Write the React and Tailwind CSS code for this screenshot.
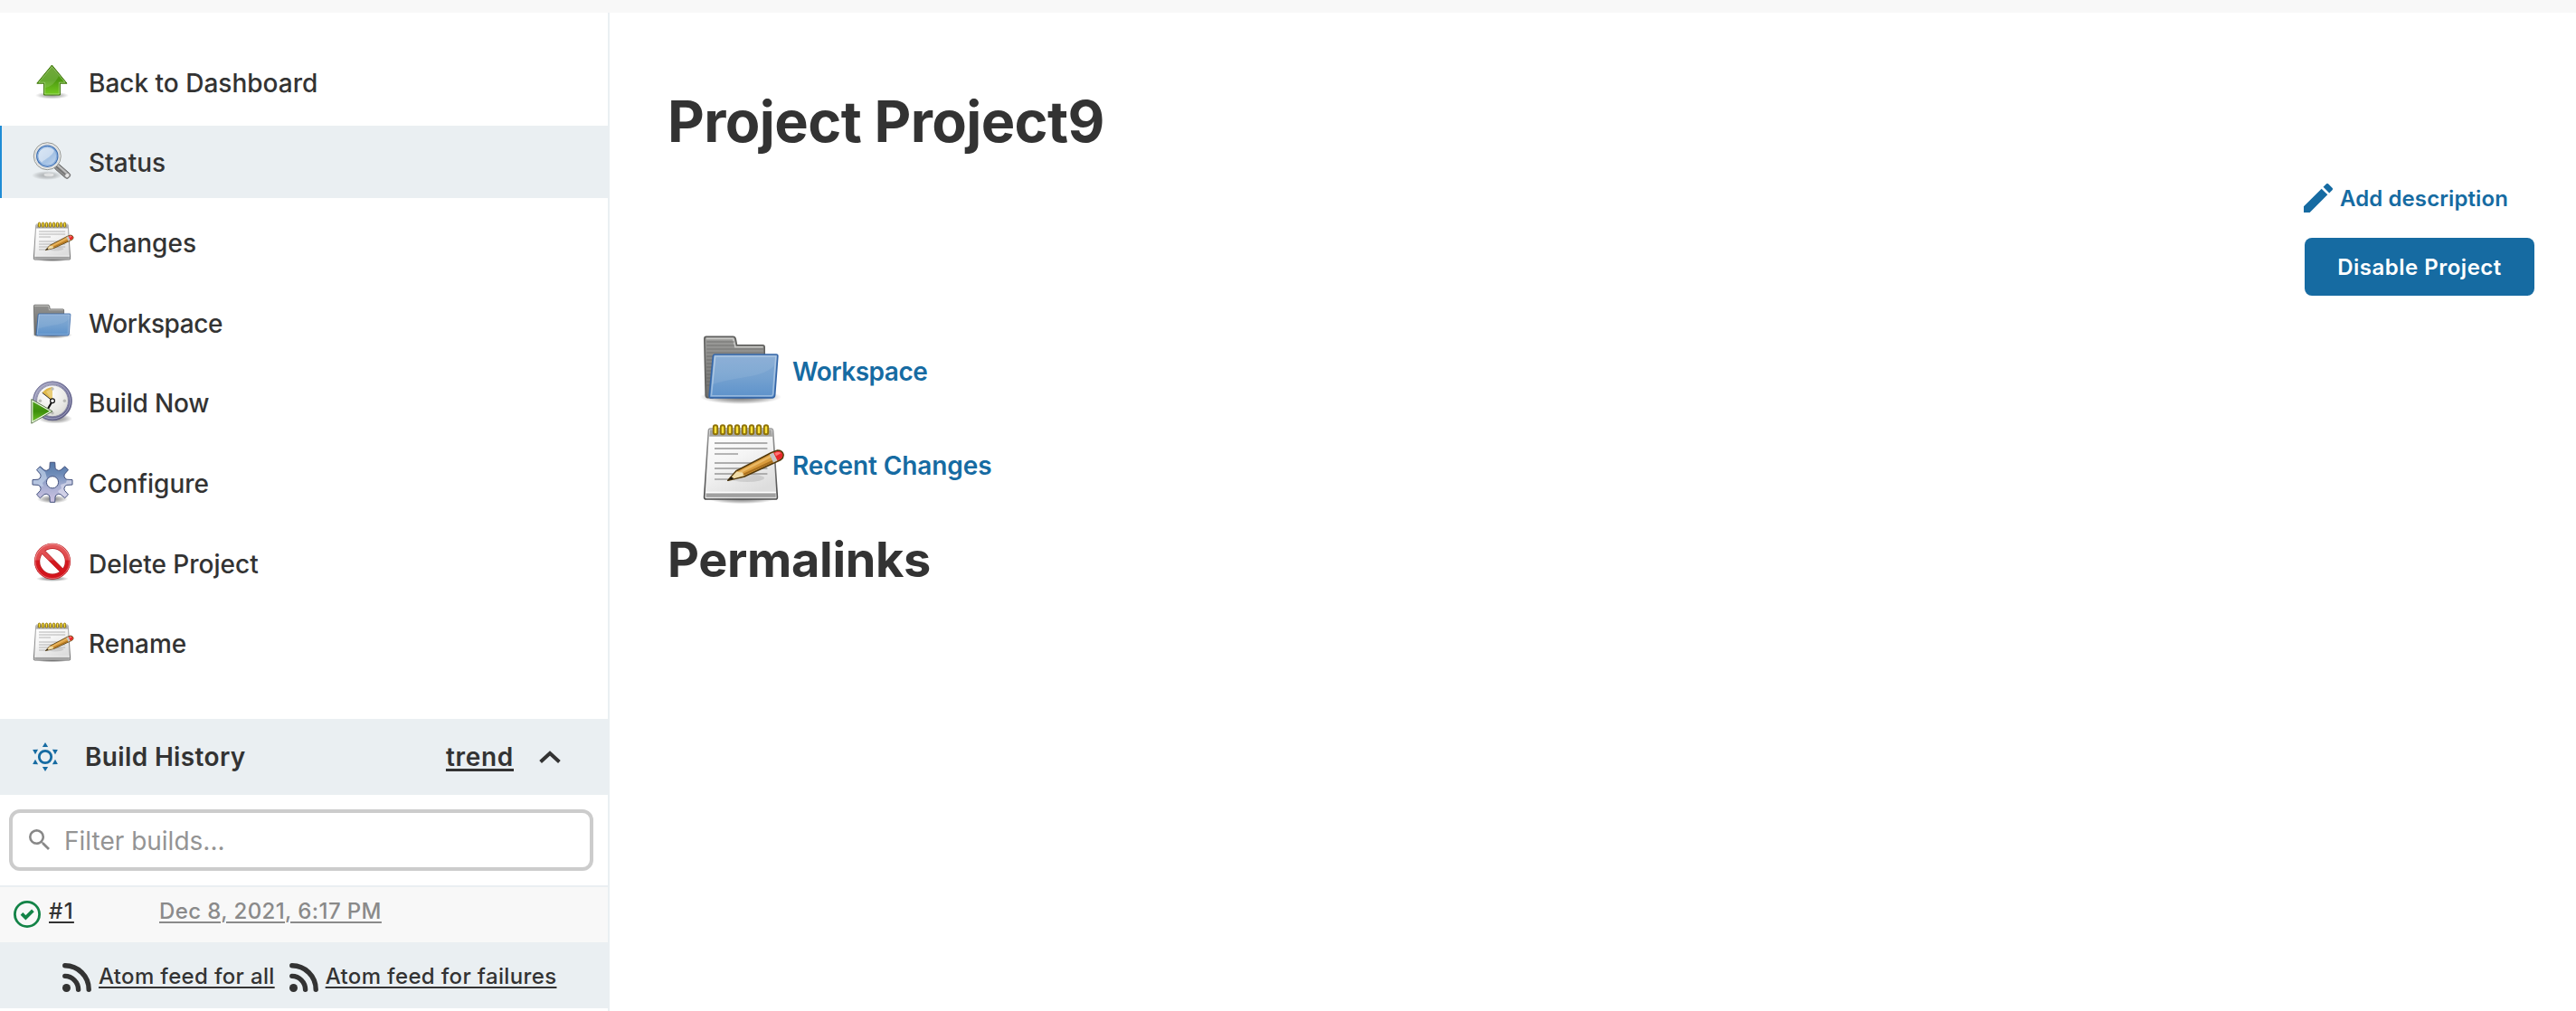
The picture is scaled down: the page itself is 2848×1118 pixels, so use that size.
import React from 'react';
import { MdEdit, MdSearch } from 'react-icons/md';

function Shadow({ id, cx, cy, rx, ry, o = 0.4 }) {
  return (
    <>
      <defs>
        <radialGradient id={id}>
          <stop offset="0" stopColor="#000" stopOpacity={o} />
          <stop offset="0.6" stopColor="#000" stopOpacity={o * 0.5} />
          <stop offset="1" stopColor="#000" stopOpacity="0" />
        </radialGradient>
      </defs>
      <ellipse cx={cx} cy={cy} rx={rx} ry={ry} fill={`url(#${id})`} />
    </>
  );
}

function ArrowUpIcon({ className }) {
  return (
    <svg viewBox="0 0 48 48" className={className}>
      <defs>
        <linearGradient id="arrow-fill" x1="0" y1="0" x2="0" y2="1">
          <stop offset="0" stopColor="#5b9a1c" />
          <stop offset="0.5" stopColor="#4d9a10" />
          <stop offset="1" stopColor="#76cc22" />
        </linearGradient>
      </defs>
      <Shadow id="arrow-shadow" cx="23.5" cy="39.5" rx="18.5" ry="4" />
      <path d="M23.4 6 L40 26.2 H32.4 V39 H14.6 V26.2 H6.8 Z" fill="url(#arrow-fill)" stroke="#3a7304" strokeWidth="1" strokeLinejoin="round" />
      <path d="M23.4 7.7 L37.9 25.2 H31.4 V38 H15.6 V25.2 H8.9 Z" fill="none" stroke="#fff" strokeOpacity="0.4" strokeWidth="0.9" />
      <path d="M23.4 8 L10 24.7 H16 V31 C22 30 27 26 31 18 Z" fill="#fff" opacity="0.14" />
    </svg>
  );
}

function MagnifierIcon({ className }) {
  return (
    <svg viewBox="0 0 48 48" className={className}>
      <defs>
        <linearGradient id="lens" x1="0" y1="0" x2="1" y2="1">
          <stop offset="0" stopColor="#c3d8f0" />
          <stop offset="0.6" stopColor="#a5c2e4" />
          <stop offset="1" stopColor="#c9dcf2" />
        </linearGradient>
      </defs>
      <Shadow id="mag-shadow" cx="18" cy="39" rx="17" ry="5" o={0.3} />
      <ellipse cx="20" cy="38.4" rx="5.5" ry="1.8" fill="#fff" opacity="0.6" />
      <g transform="rotate(41 28 28)">
        <rect x="27" y="24.8" width="20.5" height="6.8" rx="3" fill="#8e8e8e" stroke="#6a6a6a" strokeWidth="0.9" />
        <rect x="28" y="25.8" width="15" height="1.6" fill="#c4c4c4" />
        <rect x="28" y="28.4" width="15" height="0.9" fill="#686868" />
        <ellipse cx="44.5" cy="28.2" rx="2.4" ry="2.7" fill="#e6e6e6" stroke="#777" strokeWidth="0.5" />
      </g>
      <circle cx="18.3" cy="17.7" r="15" fill="#f1f1f0" stroke="#8a8c88" strokeWidth="0.9" />
      <circle cx="18.3" cy="17.7" r="13.3" fill="none" stroke="#c9cac8" strokeWidth="0.7" />
      <circle cx="18.3" cy="17.7" r="11.6" fill="url(#lens)" stroke="#3f70b2" strokeWidth="1.3" />
      <circle cx="18.3" cy="17.7" r="10.4" fill="none" stroke="#6f9bd3" strokeWidth="1" opacity="0.7" />
      <path d="M8.6 19.5 C7.5 12 13 8 19 8.2 C23 8.6 24.8 10 25.8 11.6 C24 17.5 17 20.5 12.2 24.4 C10 23 9 21.5 8.6 19.5Z" fill="#fff" opacity="0.42" />
    </svg>
  );
}

const RINGS = [9.5, 13.5, 17.5, 21.5, 25.5, 29.5, 33.5, 37.5];
const NOTE_LINES = [[12, 38.2], [15, 38.2], [18, 22], [23, 38.2], [26, 38.2], [29, 38.2], [32, 17.5]];

function NotepadIcon({ className, id }) {
  return (
    <svg viewBox="0 0 48 48" className={className}>
      <defs>
        <linearGradient id={`${id}-paper`} x1="0" y1="0" x2="0.5" y2="1">
          <stop offset="0" stopColor="#ffffff" />
          <stop offset="0.5" stopColor="#f5f5f5" />
          <stop offset="1" stopColor="#dddddd" />
        </linearGradient>
        <linearGradient id={`${id}-edge`} x1="0" y1="0" x2="0" y2="1">
          <stop offset="0" stopColor="#9a9a9a" />
          <stop offset="1" stopColor="#4a4a4a" />
        </linearGradient>
      </defs>
      <Shadow id={`${id}-shadow`} cx="24" cy="43" rx="18" ry="2.6" o={0.5} />
      <path d="M6.7 4 H40.4 Q41.2 4 41.3 5 L43.7 41.8 Q43.8 43 42.7 43 H4.4 Q3.2 43 3.3 41.8 L5.7 5 Q5.8 4 6.7 4Z" fill={`url(#${id}-paper)`} stroke={`url(#${id}-edge)`} strokeWidth="0.8" />
      <path d="M6.4 4.6 H40.6 L41 8.4 H6.1Z" fill="#a3a3a1" />
      <path d="M4.1 39.2 H43" stroke="#fff" strokeWidth="0.7" />
      <rect x="4.3" y="39.8" width="38.5" height="2.1" fill="#a0a0a0" />
      {NOTE_LINES.map(([y, x2]) => (
        <path key={y} d={`M9 ${y} H${x2}`} stroke="#adadad" strokeWidth="0.9" />
      ))}
      {RINGS.map((x) => (
        <rect key={x} x={x - 1.1} y="2.1" width="2.2" height="5" rx="1" fill="#fbe23a" stroke="#8e7209" strokeWidth="0.95" />
      ))}
      <ellipse cx="27" cy="31.3" rx="9.5" ry="2.2" fill="#000" opacity="0.1" />
      <path d="M16.4 32.6 L21 27.4 L40.2 17.4 L43.8 16 Q46.4 16 47 18.2 Q47.3 20 45.6 21.2 L26 30.3Z" fill="#d99b3c" stroke="#52380a" strokeWidth="0.8" strokeLinejoin="round" />
      <path d="M16.8 32.4 L21.2 27.7 L24.3 28 L25.6 30Z" fill="#f0dca8" />
      <path d="M22 28 L39.9 18.7 L40.5 19.8 L24.2 28.3Z" fill="#e9b864" />
      <path d="M25.2 29.7 L41.9 22.4 L41.4 21.3 L24.7 29Z" fill="#a9701f" />
      <path d="M39.4 18.3 L41.6 17.2 L43.8 21.6 L41.5 22.7Z" fill="#c6c6c6" />
      <path d="M41.6 17.2 L43.9 16.4 Q46 16.4 46.6 18.2 Q46.9 19.8 45.4 20.8 L43.8 21.6Z" fill="#e8262a" />
      <path d="M42.2 17.5 Q44.6 16.4 45.7 17.6 L43 19.1Z" fill="#f77" />
      <path d="M16.2 32.7 L18.2 30.5 L19.8 31.6Z" fill="#1c1508" />
    </svg>
  );
}

function FolderIcon({ className, id }) {
  return (
    <svg viewBox="0 0 48 48" className={className}>
      <defs>
        <linearGradient id={`${id}-back`} x1="0" y1="0" x2="0" y2="1">
          <stop offset="0" stopColor="#9c9c9a" />
          <stop offset="1" stopColor="#6e6e6c" />
        </linearGradient>
        <linearGradient id={`${id}-front`} x1="0" y1="0" x2="0" y2="1">
          <stop offset="0" stopColor="#84aad4" />
          <stop offset="0.5" stopColor="#76a2d0" />
          <stop offset="1" stopColor="#5d92cb" />
        </linearGradient>
      </defs>
      <Shadow id={`${id}-shadow`} cx="23.5" cy="38.5" rx="22.5" ry="4" o={0.6} />
      <path d="M4.4 5.2 H19.2 Q20.3 5.2 20.6 6.4 L21.3 9.9 H35.6 Q36.6 9.9 36.6 11 V20 L8 38.8 H5.2 Q4.2 38.8 4.1 37.6 L3.4 6.4 Q3.4 5.2 4.4 5.2Z" fill={`url(#${id}-back)`} stroke="#5f5f5d" strokeWidth="0.8" />
      <path d="M4.4 6.2 H19.3 L20.4 10.9 H35.8" fill="none" stroke="#d4d4d2" strokeWidth="0.8" opacity="0.8" />
      {[8, 10, 12, 14, 16, 18, 20, 22, 24, 26, 28, 30, 32].map((y) => (
        <path key={y} d={`M4.6 ${y} H${y < 11 ? 20 : y < 15 ? 36 : 8}`} stroke="#5c5c5a" strokeWidth="0.6" opacity="0.5" />
      ))}
      <path d="M9.2 15 H43.1 Q44 15 43.9 16 L42.3 37.4 Q42.1 38.9 40.8 38.9 H6.9 Q6 38.9 6.1 37.8 L8.2 16 Q8.3 15 9.2 15Z" fill={`url(#${id}-front)`} stroke="#3667a8" strokeWidth="0.85" />
      <path d="M9.3 16 H42.9 L41.3 36.8 Q41.1 37.9 40.4 37.9 H7.2Z" fill="none" stroke="#fff" strokeOpacity="0.35" strokeWidth="0.8" />
      <path d="M9 16.5 H42.4 L42 21 C36 28 24 26.5 7.8 31.5Z" fill="#fff" opacity="0.08" />
    </svg>
  );
}

function ClockIcon({ className }) {
  return (
    <svg viewBox="0 0 48 48" className={className}>
      <defs>
        <linearGradient id="clock-ring" x1="0" y1="0" x2="1" y2="1">
          <stop offset="0" stopColor="#a9a9c4" />
          <stop offset="0.5" stopColor="#7d7da3" />
          <stop offset="1" stopColor="#5c5c86" />
        </linearGradient>
        <radialGradient id="clock-face" cx="0.4" cy="0.3" r="0.8">
          <stop offset="0" stopColor="#ffffff" />
          <stop offset="0.6" stopColor="#e9e9e5" />
          <stop offset="1" stopColor="#d0d0ca" />
        </radialGradient>
        <linearGradient id="play-fill" x1="0" y1="0" x2="0" y2="1">
          <stop offset="0" stopColor="#52a31b" />
          <stop offset="0.5" stopColor="#3d8f0b" />
          <stop offset="1" stopColor="#74c92a" />
        </linearGradient>
      </defs>
      <Shadow id="clock-shadow" cx="27" cy="42" rx="19" ry="5.5" o={0.5} />
      <circle cx="24" cy="22.3" r="19.6" fill="url(#clock-face)" stroke="url(#clock-ring)" strokeWidth="3.8" />
      <circle cx="24" cy="22.3" r="21.4" fill="none" stroke="#55557c" strokeWidth="0.7" />
      <circle cx="24" cy="22.3" r="19.7" fill="none" stroke="#c2c2d8" strokeWidth="0.8" opacity="0.8" />
      <circle cx="24" cy="22.3" r="17.4" fill="none" stroke="#6a6a90" strokeWidth="0.7" />
      <path d="M24 22.3 L12.7 13.3 Q16.5 8 24 7Z" fill="#dfb84a" />
      <path d="M24 22.3 L17 12 L24 8Z" fill="#edd58a" opacity="0.7" />
      <g fill="#b9bab5">
        <circle cx="37.4" cy="22.3" r="1.7" />
        <circle cx="24" cy="9" r="1.7" />
        <circle cx="10.4" cy="22.3" r="1.7" />
        <circle cx="24" cy="35.8" r="1.7" />
      </g>
      <path d="M24 22.3 L12.7 13.3" stroke="#222" strokeWidth="0.9" />
      <path d="M24 22.3 L19 31" stroke="#111" strokeWidth="2.1" />
      <circle cx="24" cy="22.3" r="2.4" fill="#fff" stroke="#111" strokeWidth="1.2" />
      <path d="M0.8 20.5 L24 33.8 L0.8 47.2Z" fill="url(#play-fill)" stroke="#55694a" strokeWidth="0.9" />
      <path d="M1.8 22.2 L22 33.8 L1.8 45.5Z" fill="none" stroke="#f3f8ef" strokeWidth="1.1" />
    </svg>
  );
}

const GEAR_PATH = (() => {
  const pts = [];
  for (let i = 0; i < 8; i += 1) {
    [[-17, 14.6], [-11, 16.2], [-7, 22.2], [7, 22.2], [11, 16.2], [17, 14.6]].forEach(([deg, r]) => {
      const a = ((i * 45 + deg - 90) * Math.PI) / 180;
      pts.push(`${(24 + r * Math.cos(a)).toFixed(2)} ${(23.3 + r * Math.sin(a)).toFixed(2)}`);
    });
  }
  return `M${pts.join(' L')}Z M30.6 23.3 A6.6 6.6 0 1 0 17.4 23.3 A6.6 6.6 0 1 0 30.6 23.3Z`;
})();

function GearIcon({ className }) {
  return (
    <svg viewBox="0 0 48 48" className={className}>
      <defs>
        <linearGradient id="gear-fill" x1="0" y1="0" x2="0" y2="1">
          <stop offset="0" stopColor="#5578a8" />
          <stop offset="0.3" stopColor="#6f8cb8" />
          <stop offset="0.6" stopColor="#a6aed2" />
          <stop offset="1" stopColor="#cfc3e2" />
        </linearGradient>
        <clipPath id="gear-clip">
          <path d={GEAR_PATH} clipRule="evenodd" />
        </clipPath>
      </defs>
      <Shadow id="gear-shadow" cx="24" cy="42" rx="17" ry="4.5" o={0.5} />
      <circle cx="24" cy="23.3" r="6.6" fill="#fff" />
      <path d={GEAR_PATH} fill="url(#gear-fill)" fillRule="evenodd" />
      <g clipPath="url(#gear-clip)">
        <path d="M2 28 V14 L9 6 L16 12 L18 19 L13 24 L14 28 L8 27Z" fill="#c3d3ea" opacity="0.7" />
        <path d="M46 18 V28 L41 40 L33 38 L30 33 L34 30 L33 26 L39 24 L40 20Z" fill="#dfdff0" opacity="0.65" />
      </g>
      <path d={GEAR_PATH} fill="none" stroke="#45537f" strokeWidth="1" strokeLinejoin="round" />
    </svg>
  );
}

function ForbiddenIcon({ className }) {
  return (
    <svg viewBox="0 0 48 48" className={className}>
      <defs>
        <linearGradient id="no-fill" gradientUnits="userSpaceOnUse" x1="0" y1="3" x2="0" y2="42">
          <stop offset="0" stopColor="#e35a5c" />
          <stop offset="0.45" stopColor="#e0484b" />
          <stop offset="0.5" stopColor="#d31a20" />
          <stop offset="1" stopColor="#d3141c" />
        </linearGradient>
      </defs>
      <Shadow id="no-shadow" cx="24" cy="42" rx="18" ry="3" o={0.5} />
      <g fill="none">
        <circle cx="24" cy="22.7" r="16.9" fill="#fff" stroke="#b3181d" strokeWidth="6.2" />
        <path d="M13 11.7 L35 33.7" stroke="#b3181d" strokeWidth="5.2" />
        <circle cx="24" cy="22.7" r="17" stroke="url(#no-fill)" strokeWidth="5.2" />
        <path d="M12 10.7 L36 34.7" stroke="url(#no-fill)" strokeWidth="4.2" />
        <circle cx="24" cy="22.7" r="18.9" stroke="#fff" strokeOpacity="0.45" strokeWidth="0.8" />
      </g>
    </svg>
  );
}

function BuildStatusIcon({ className }) {
  return (
    <svg viewBox="0 0 32 32" className={className}>
      <circle cx="16" cy="16" r="6.7" fill="none" stroke="#166ba2" strokeWidth="2.8" />
      {[0, 60, 120, 180, 240, 300].map((a) => (
        <path key={a} d="M16 0 L19.1 5.1 H12.9Z" fill="#166ba2" transform={`rotate(${a} 16 16)`} />
      ))}
    </svg>
  );
}

function SuccessIcon({ className }) {
  return (
    <svg viewBox="0 0 30 30" className={className} fill="none" stroke="#138347">
      <circle cx="15" cy="15" r="13.6" strokeWidth="2.8" />
      <path d="M9 14.4 L13.4 18.8 L21.4 10.9" strokeWidth="3.8" />
    </svg>
  );
}

function RssIcon({ className }) {
  return (
    <svg viewBox="0 0 32 32" className={className} fill="none" stroke="#333" strokeWidth="5.4" strokeLinecap="round">
      <circle cx="4.5" cy="27.5" r="4.5" fill="#333" stroke="none" />
      <path d="M2.8 14.4 A15 15 0 0 1 17.6 29.2" />
      <path d="M2.8 2.8 A26.4 26.4 0 0 1 29.2 29.2" />
    </svg>
  );
}

const TASKS = [
  { label: 'Back to Dashboard', icon: <ArrowUpIcon className="size-12" /> },
  { label: 'Status', icon: <MagnifierIcon className="size-12" />, active: true },
  { label: 'Changes', icon: <NotepadIcon id="changes" className="size-12" /> },
  { label: 'Workspace', icon: <FolderIcon id="workspace" className="size-12" />, tracking: 'tracking-[-0.4px]' },
  { label: 'Build Now', icon: <ClockIcon className="size-12" />, tracking: 'tracking-[-0.2px]' },
  { label: 'Configure', icon: <GearIcon className="size-12" /> },
  { label: 'Delete Project', icon: <ForbiddenIcon className="size-12" /> },
  { label: 'Rename', icon: <NotepadIcon id="rename" className="size-12" /> },
];

function Sidebar() {
  return (
    <aside className="flex w-[674px] shrink-0 flex-col border-r-2 border-[#eaeff2]">
      <nav className="flex flex-col gap-[8.67px] pt-[36.3px]">
        {TASKS.map((t) => (
          <a
            key={t.label}
            className={`flex h-20 items-center border-l-2 pl-8 ${t.active ? 'border-[#1f8cd6] bg-[#eaeff2]' : 'border-transparent'}`}
          >
            {t.icon}
            <span className={`ml-4 pt-[3px] text-[28px] leading-8 font-medium ${t.tracking ?? ''}`}>{t.label}</span>
          </a>
        ))}
      </nav>

      <section className="mt-11">
        <header className="flex h-[84px] items-center bg-[#eaeff2] pl-[34px]">
          <BuildStatusIcon className="size-8" />
          <h3 className="ml-7 text-[28px] leading-8 font-semibold tracking-[0.35px]">Build History</h3>
          <a className="ml-auto text-[28px] leading-8 font-semibold tracking-[0.7px] underline decoration-[3px] underline-offset-[3px]">trend</a>
          <svg viewBox="0 0 24 14" className="mr-[52px] ml-7 h-[14px] w-6" fill="none" stroke="#333" strokeWidth="4">
            <path d="M1.6 12.4 L12 2.9 L22.4 12.4" />
          </svg>
        </header>

        <div className="py-4 pr-4 pl-[10px]">
          <div className="flex h-[68px] items-center rounded-xl border-4 border-[#ccc] pl-[18px]">
            <MdSearch viewBox="3 3 17.5 17.5" className="size-[23px] text-[#888]" />
            <span className="ml-4 pt-[3px] text-[28px] leading-8 text-[#949494]">Filter builds...</span>
          </div>
        </div>

        <div className="flex h-[63px] border-t-2 border-[#eaeff2] bg-[#f8f8f8] pt-[15px] pl-[15px] text-2xl leading-[30px] font-medium">
          <SuccessIcon className="size-[30px]" />
          <a className="-mt-[3px] ml-[9px] w-[122px]">
            <span className="tracking-[1.3px] underline decoration-2 underline-offset-[3px]">#1</span>
          </a>
          <a className="-mt-[3px] tracking-[0.4px] text-[#8a8a8a] underline decoration-2 underline-offset-[3px]">Dec 8, 2021, 6:17 PM</a>
        </div>

        <footer className="flex h-[73px] items-start bg-[#eaeff2] pt-[23px] pl-[69px] text-2xl leading-8 font-medium">
          <RssIcon className="size-8" />
          <a className="-mt-px ml-2 tracking-[0.34px] underline decoration-2 underline-offset-[3px]">Atom feed for all</a>
          <RssIcon className="ml-4 size-8" />
          <a className="-mt-px ml-2 tracking-[0.36px] underline decoration-2 underline-offset-[3px]">Atom feed for failures</a>
        </footer>
      </section>
    </aside>
  );
}

export default function App() {
  return (
    <div className="flex h-[1118px] w-[2848px] flex-col overflow-hidden bg-white font-['Inter',sans-serif] text-[#333]">
      <div className="h-[14px] shrink-0 bg-[#f8f8f8]" />
      <div className="flex grow">
        <Sidebar />
        <main className="flex grow flex-col pt-[82px] pr-[46px] pl-16">
          <h1 className="text-[63px] leading-[76px] font-bold tracking-[-0.6px]">Project Project9</h1>

          <div className="mt-[31px] flex w-[255px] flex-col gap-7 self-end text-2xl font-semibold">
            <a className="flex h-8 items-center text-[#166ba2]">
              <MdEdit viewBox="3 3 18 18" className="size-8" />
              <span className="ml-2 pt-px tracking-[0.1px]">Add description</span>
            </a>
            <button className="ml-px h-16 rounded-lg bg-[#166ba2] pt-px tracking-[0.5px] text-white">Disable Project</button>
          </div>

          <div className="mt-[35px] ml-[34px] flex flex-col gap-2 text-[28px] font-semibold text-[#166ba2]">
            <a className="flex items-center gap-2">
              <FolderIcon id="main-workspace" className="size-24" />
              <span className="pt-px tracking-[-0.5px]">Workspace</span>
            </a>
            <a className="flex items-center gap-2">
              <NotepadIcon id="main-changes" className="size-24" />
              <span className="pt-px tracking-[-0.1px]">Recent Changes</span>
            </a>
          </div>

          <h2 className="mt-[25px] text-[54px] leading-[64px] font-bold tracking-[-0.33px]">Permalinks</h2>
        </main>
      </div>
    </div>
  );
}
